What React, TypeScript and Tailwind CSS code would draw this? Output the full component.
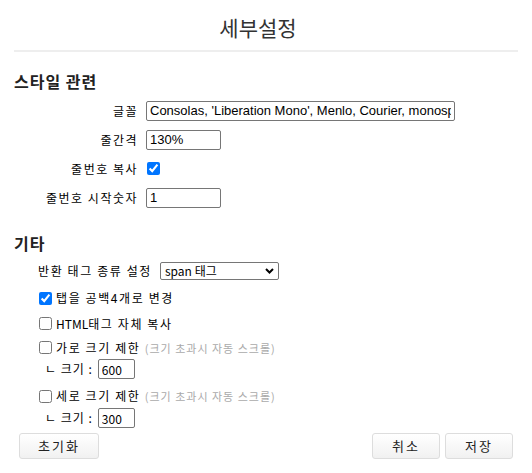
import React, { useState } from "react";

const ko = { fontFamily: "'Noto Sans CJK KR', 'Liberation Sans', sans-serif" };

function Row({ label, children }: { label: string; children: React.ReactNode }) {
  return (
    <div className="flex items-center h-[29px]">
      <div className="w-[132px] pr-[8px] text-right text-[12px] tracking-[1.5px] text-black">{label}</div>
      {children}
    </div>
  );
}

export default function App() {
  const [font, setFont] = useState("Consolas, 'Liberation Mono', Menlo, Courier, monospace");
  const [lineHeight, setLineHeight] = useState("130%");
  const [startNo, setStartNo] = useState("1");
  const [width, setWidth] = useState("600");
  const [height, setHeight] = useState("300");

  const inputCls =
    "h-[20px] border border-[#767676] rounded-[2px] px-[3px] text-[12px] text-black bg-white outline-none";
  const btnCls =
    "h-[26px] border border-[#ddd] rounded-[3px] bg-gradient-to-b from-white to-[#f1f1f1] text-[13px] tracking-[2px] text-[#222]";

  return (
    <div className="w-[532px] h-[473px] bg-white flex flex-col" style={ko}>
      {/* 제목 */}
      <div className="h-[50px] flex items-center justify-center pt-[6px] pr-[16px]">
        <h1 className="text-[21px] text-[#333]">세부설정</h1>
      </div>
      <div className="mx-[14px] h-[2px] bg-[#eeeeee]" />

      {/* 스타일 관련 */}
      <div className="px-[14px] pt-[17px]">
        <h2 className="text-[16px] font-bold tracking-[1px] text-[#222] h-[24px] leading-[24px]">스타일 관련</h2>
        <div className="mt-[3px]">
          <Row label="글꼴">
            <input
              value={font}
              onChange={(e) => setFont(e.target.value)}
              className={inputCls + " w-[309px]"}
              style={{ fontFamily: "'Liberation Sans', sans-serif", fontSize: 13 }}
            />
          </Row>
          <Row label="줄간격">
            <input
              value={lineHeight}
              onChange={(e) => setLineHeight(e.target.value)}
              className={inputCls + " w-[75px]"}
              style={{ fontFamily: "'Liberation Sans', sans-serif", fontSize: 13 }}
            />
          </Row>
          <Row label="줄번호 복사">
            <input type="checkbox" defaultChecked className="w-[13px] h-[13px] m-0 ml-[1px] accent-[#0075ff]" />
          </Row>
          <Row label="줄번호 시작숫자">
            <input
              value={startNo}
              onChange={(e) => setStartNo(e.target.value)}
              className={inputCls + " w-[75px]"}
              style={{ fontFamily: "'Liberation Sans', sans-serif", fontSize: 13 }}
            />
          </Row>
        </div>
      </div>

      {/* 기타 */}
      <div className="px-[14px] pt-[19px]">
        <h2 className="text-[16px] font-bold tracking-[1px] text-[#222] h-[24px] leading-[24px]">기타</h2>
        <div className="pl-[24px] text-[12px] tracking-[1.6px] text-black">
          <div className="flex items-center h-[28px] mt-[2px] gap-[8px]">
            <span>반환 태그 종류 설정</span>
            <div className="relative">
              <select
                defaultValue="span"
                className="appearance-none h-[18px] w-[119px] border border-[#767676] rounded-[2px] text-[12px] leading-[16px] tracking-normal pl-[4px] bg-white outline-none"
              >
                <option value="span">span 태그</option>
                <option value="font">font 태그</option>
              </select>
              <svg
                className="absolute right-[5px] top-[6px] pointer-events-none"
                width="9"
                height="6"
                viewBox="0 0 9 6"
              >
                <path d="M1 1 L4.5 4.5 L8 1" fill="none" stroke="#000" strokeWidth="2" />
              </svg>
            </div>
          </div>
          <label className="flex items-center h-[26px] gap-[4px]">
            <input type="checkbox" defaultChecked className="w-[13px] h-[13px] m-0 ml-[1px] accent-[#0075ff]" />
            <span>탭을 공백4개로 변경</span>
          </label>
          <label className="flex items-center h-[25px] gap-[4px]">
            <input type="checkbox" className="w-[13px] h-[13px] m-0 ml-[1px]" />
            <span>
              <span className="tracking-normal">HTML</span>태그 자체 복사
            </span>
          </label>
          <label className="flex items-center h-[23px] gap-[4px]">
            <input type="checkbox" className="w-[13px] h-[13px] m-0 ml-[1px]" />
            <span>
              가로 크기 제한{" "}
              <span className="text-[11px] tracking-[1px] text-[#aaa]">(크기 초과시 자동 스크롤)</span>
            </span>
          </label>
          <div className="flex items-center h-[20px] pl-[7px] gap-[5px] tracking-[1px]">
            <span>ㄴ 크기 :</span>
            <input
              value={width}
              onChange={(e) => setWidth(e.target.value)}
              className={inputCls + " w-[37px] px-[2px] tracking-normal"}
            />
          </div>
          <label className="flex items-center h-[29px] pt-[5px] gap-[4px]">
            <input type="checkbox" className="w-[13px] h-[13px] m-0 ml-[1px]" />
            <span>
              세로 크기 제한{" "}
              <span className="text-[11px] tracking-[1px] text-[#aaa]">(크기 초과시 자동 스크롤)</span>
            </span>
          </label>
          <div className="flex items-center h-[20px] pl-[7px] gap-[5px] tracking-[1px]">
            <span>ㄴ 크기 :</span>
            <input
              value={height}
              onChange={(e) => setHeight(e.target.value)}
              className={inputCls + " w-[37px] px-[2px] tracking-normal"}
            />
          </div>
        </div>
      </div>

      {/* 버튼 */}
      <div className="flex items-center justify-between px-[19px] mt-[5px]">
        <button className={btnCls + " w-[80px]"}>초기화</button>
        <div className="flex gap-[5px]">
          <button className={btnCls + " w-[68px]"}>취소</button>
          <button className={btnCls + " w-[68px]"}>저장</button>
        </div>
      </div>
    </div>
  );
}
